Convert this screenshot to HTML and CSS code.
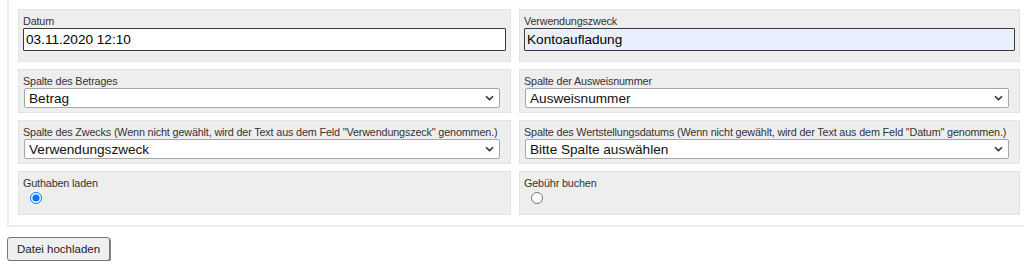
FILE: index.html
```html
<!DOCTYPE html>
<html lang="de">
  <head>
    <meta charset="utf-8" />
    <title>Datei hochladen</title>
    <link rel="stylesheet" href="styles.css">
  </head>
  <body>
    <div class="panel">
      <div class="grid">
        <div class="cell">
          <label class="cap" for="datum">Datum</label>
          <input class="text" id="datum" type="text" value="03.11.2020 12:10">
        </div>
        <div class="cell">
          <label class="cap" for="zweck">Verwendungszweck</label>
          <input class="text autofill" id="zweck" type="text" value="Kontoaufladung">
        </div>

        <div class="cell">
          <label class="cap" for="betrag">Spalte des Betrages</label>
          <span class="pick">
            <select id="betrag"><option>Betrag</option></select>
            <svg class="chev" width="9" height="6" viewBox="0 0 9 6"><path d="M1 1.2 L4.5 4.6 L8 1.2" fill="none" stroke="#333" stroke-width="1.6"/></svg>
          </span>
        </div>
        <div class="cell">
          <label class="cap" for="ausweis">Spalte der Ausweisnummer</label>
          <span class="pick">
            <select id="ausweis"><option>Ausweisnummer</option></select>
            <svg class="chev" width="9" height="6" viewBox="0 0 9 6"><path d="M1 1.2 L4.5 4.6 L8 1.2" fill="none" stroke="#333" stroke-width="1.6"/></svg>
          </span>
        </div>

        <div class="cell">
          <label class="cap" for="zwecks">Spalte des Zwecks (Wenn nicht gewählt, wird der Text aus dem Feld "Verwendungszeck" genommen.)</label>
          <span class="pick">
            <select id="zwecks"><option>Verwendungszweck</option></select>
            <svg class="chev" width="9" height="6" viewBox="0 0 9 6"><path d="M1 1.2 L4.5 4.6 L8 1.2" fill="none" stroke="#333" stroke-width="1.6"/></svg>
          </span>
        </div>
        <div class="cell">
          <label class="cap" for="wert">Spalte des Wertstellungsdatums (Wenn nicht gewählt, wird der Text aus dem Feld "Datum" genommen.)</label>
          <span class="pick">
            <select id="wert"><option>Bitte Spalte auswählen</option></select>
            <svg class="chev" width="9" height="6" viewBox="0 0 9 6"><path d="M1 1.2 L4.5 4.6 L8 1.2" fill="none" stroke="#333" stroke-width="1.6"/></svg>
          </span>
        </div>

        <div class="cell">
          <label class="cap" for="laden">Guthaben laden</label>
          <input class="radio" id="laden" type="radio" name="art" checked>
        </div>
        <div class="cell">
          <label class="cap" for="gebuehr">Gebühr buchen</label>
          <input class="radio" id="gebuehr" type="radio" name="art">
        </div>
      </div>
    </div>

    <button class="upload" type="button">Datei hochladen</button>
  </body>
</html>
```

FILE: styles.css
```css
body {
  margin: 0 0 0 7px;
  overflow: hidden;
  background-color: #fff;
  font-family: "Liberation Sans", Arial, sans-serif;
  color: #222;
}
.panel {
  width: 1023px;
  box-sizing: border-box;
  padding: 9px 9px 10px 9px;
  border-left: 2px solid #ececec;
  border-bottom: 2px solid #ececec;
}
.grid {
  display: grid;
  grid-template-columns: 493px 501px;
  column-gap: 8px;
  row-gap: 7px;
}
.cell {
  background-color: #eee;
  border: 1px solid #e3e3e3;
  padding: 4px;
}
.cap {
  display: block;
  font-size: 10.8px;
  letter-spacing: -0.15px;
  line-height: 14px;
  color: #333;
  white-space: nowrap;
}
.text {
  display: block;
  width: 100%;
  height: 23px;
  box-sizing: border-box;
  margin: 0 0 6px 0;
  padding: 0 2px;
  border: 1px solid #3a3a3a;
  border-radius: 1px;
  background-color: #fff;
  font-family: "Liberation Sans", Arial, sans-serif;
  font-size: 13.6px;
  color: #000;
  outline: none;
}
.text.autofill {
  background-color: #e8f0fe;
}
.pick {
  position: relative;
  display: block;
  width: 98.5%;
  margin-left: 1px;
}
.pick select {
  display: block;
  width: 100%;
  height: 20px;
  box-sizing: border-box;
  margin: 0;
  padding: 0 20px 0 4px;
  -webkit-appearance: none;
  appearance: none;
  border: 1px solid #a7a7a7;
  border-radius: 2px;
  background-color: #fff;
  font-family: "Liberation Sans", Arial, sans-serif;
  font-size: 13.6px;
  color: #111;
}
.chev {
  position: absolute;
  right: 6px;
  top: 7px;
  pointer-events: none;
}
.radio {
  display: block;
  width: 12px;
  height: 12px;
  margin: 2px 0 6px 7px;
}
.upload {
  display: block;
  margin-top: 10px;
  height: 24px;
  padding: 0 9px;
  white-space: nowrap;
  background-color: #efefef;
  border: 1px solid #767676;
  border-radius: 3px;
  box-shadow: 1px 1px 0 #8a8a8a;
  font-family: "Liberation Sans", Arial, sans-serif;
  font-size: 11.5px;
  color: #222;
}
```
